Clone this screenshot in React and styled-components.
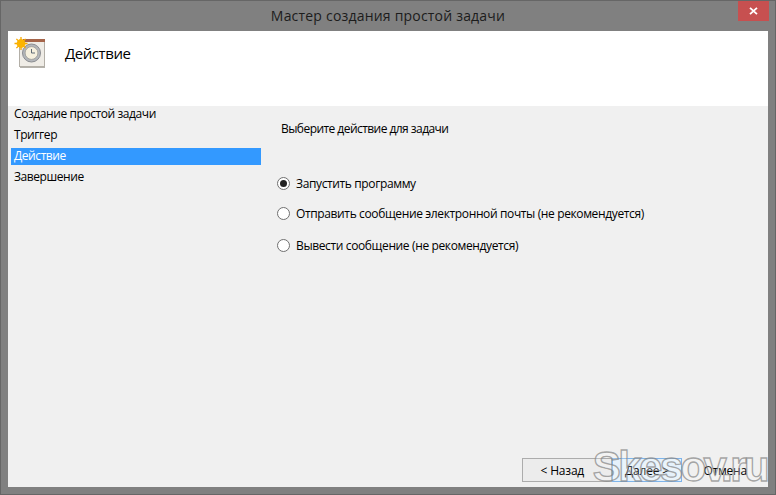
import React from "react";
import styled, { createGlobalStyle } from "styled-components";

const GlobalStyle = createGlobalStyle`
  html, body {
    margin: 0;
    padding: 0;
    background: #808080;
  }
  * {
    box-sizing: border-box;
  }
`;

const steps = ["Создание простой задачи", "Триггер", "Действие", "Завершение"];

const options = [
  { label: "Запустить программу", checked: true, gap: 0 },
  { label: "Отправить сообщение электронной почты (не рекомендуется)", gap: 14 },
  { label: "Вывести сообщение (не рекомендуется)", gap: 16 },
];

function TaskIcon() {
  return (
    <svg width="34" height="34" viewBox="0 0 34 34">
      <rect x="6" y="29" width="25" height="2" fill="#b5b2ab" />
      <rect x="5.5" y="4.5" width="25" height="25" fill="#efece6" stroke="#b3afa7" />
      <rect x="9" y="2" width="22" height="3" fill="#a5654a" />
      <circle cx="17.5" cy="16" r="9" fill="#b4b7bb" stroke="#8a8c90" />
      <circle cx="17.5" cy="16" r="6.4" fill="#f6f0de" stroke="#8f8f8d" strokeWidth="0.7" />
      <path d="M17.5 12V16H21" fill="none" stroke="#5f6a74" strokeWidth="1" />
      <g stroke="#f6a800" strokeWidth="1.3">
        <path d="M7 0V13M0.5 6.5H13.5M2.4 1.9L11.6 11.1M11.6 1.9L2.4 11.1" />
      </g>
      <circle cx="7" cy="6.5" r="4.4" fill="#fcb400" />
    </svg>
  );
}

export default function App() {
  return (
    <>
      <GlobalStyle />
      <Window>
        <TitleBar>
          <Title>Мастер создания простой задачи</Title>
          <CloseButton>
            <svg width="9" height="8" viewBox="0 0 9 8">
              <path d="M1 0.8L8 7.2M8 0.8L1 7.2" stroke="#fff" strokeWidth="1.8" />
            </svg>
          </CloseButton>
        </TitleBar>
        <Client>
          <Header>
            <TaskIcon />
            <HeaderTitle>Действие</HeaderTitle>
          </Header>
          <Body>
            <Sidebar>
              {steps.map((step) => (
                <Step key={step} $active={step === "Действие"}>
                  {step}
                </Step>
              ))}
            </Sidebar>
            <Main>
              <Prompt>Выберите действие для задачи</Prompt>
              <Options>
                {options.map((option) => (
                  <Option key={option.label} $gap={option.gap}>
                    <Radio $checked={option.checked} />
                    {option.label}
                  </Option>
                ))}
              </Options>
            </Main>
          </Body>
          <Footer>
            <Button>&lt; Назад</Button>
            <Button $primary>Далее &gt;</Button>
            <Button $plain>Отмена</Button>
          </Footer>
          <Watermark>Skesov.ru</Watermark>
        </Client>
      </Window>
    </>
  );
}

const Window = styled.div`
  position: relative;
  width: 776px;
  height: 495px;
  display: flex;
  flex-direction: column;
  padding: 0 7px 7px;
  background: #808080;
  border: 1px solid #666;
  font-family: "Open Sans", "Noto Sans", sans-serif;
  font-size: 12px;
  letter-spacing: -0.42px;
  color: #000;
  overflow: hidden;
`;

const TitleBar = styled.div`
  position: relative;
  height: 30px;
  display: flex;
  align-items: center;
  justify-content: center;
  flex-shrink: 0;
`;

const Title = styled.div`
  font-size: 14px;
  letter-spacing: 0.2px;
  color: #1c1c1c;
  margin-top: -1px;
`;

const CloseButton = styled.div`
  position: absolute;
  top: 0;
  right: -1px;
  width: 31px;
  height: 20px;
  display: flex;
  align-items: center;
  justify-content: center;
  background: #c75050;
`;

const Client = styled.div`
  position: relative;
  flex: 1;
  display: flex;
  flex-direction: column;
  background: #f0f0f0;
`;

const Header = styled.div`
  height: 75px;
  flex-shrink: 0;
  display: flex;
  align-items: flex-start;
  gap: 17px;
  padding: 6px 0 0 6px;
  background: #fff;
`;

const HeaderTitle = styled.div`
  font-size: 15px;
  letter-spacing: -0.45px;
  line-height: 20px;
  margin-top: 6px;
`;

const Body = styled.div`
  flex: 1;
  display: flex;
`;

const Sidebar = styled.div`
  width: 250px;
  margin-left: 3px;
  display: flex;
  flex-direction: column;
  gap: 4px;
`;

const Step = styled.div`
  height: 17px;
  line-height: 16px;
  padding-left: 3px;
  background: ${(p) => (p.$active ? "#3399ff" : "transparent")};
  color: ${(p) => (p.$active ? "#fff" : "#000")};
`;

const Main = styled.div`
  flex: 1;
  padding: 15px 0 0 16px;
`;

const Prompt = styled.div`
  line-height: 16px;
  margin-left: 4px;
  letter-spacing: -0.55px;
`;

const Options = styled.div`
  display: flex;
  flex-direction: column;
  margin-top: 38px;
  letter-spacing: -0.37px;
`;

const Option = styled.div`
  display: flex;
  align-items: center;
  gap: 6px;
  height: 16px;
  margin-top: ${(p) => p.$gap}px;
`;

const Radio = styled.span`
  position: relative;
  width: 13px;
  height: 13px;
  border-radius: 50%;
  border: 1px solid #707070;
  background: #fff;
  flex-shrink: 0;
  &::after {
    content: "";
    display: ${(p) => (p.$checked ? "block" : "none")};
    position: absolute;
    inset: 2px;
    border-radius: 50%;
    background: #222;
  }
`;

const Footer = styled.div`
  height: 29px;
  flex-shrink: 0;
  display: flex;
  padding-left: 514px;
  letter-spacing: -0.2px;
`;

const Button = styled.div`
  width: ${(p) => (p.$primary ? "71px" : p.$plain ? "86px" : "90px")};
  height: 24px;
  display: flex;
  align-items: center;
  justify-content: center;
  padding-right: ${(p) => (p.$primary || p.$plain ? "0" : "9px")};
  border: 1px solid ${(p) => (p.$primary ? "#7eb4ea" : p.$plain ? "transparent" : "#acacac")};
  background: ${(p) => (p.$primary ? "#e5f1fb" : p.$plain ? "transparent" : "#ececec")};
`;

const Watermark = styled.div`
  position: absolute;
  right: 1px;
  bottom: -4px;
  font-family: "Liberation Sans", sans-serif;
  font-size: 42px;
  font-weight: bold;
  letter-spacing: -2.6px;
  color: rgba(255, 255, 255, 0.22);
  -webkit-text-stroke: 1.3px rgba(130, 130, 130, 0.7);
  pointer-events: none;
`;
